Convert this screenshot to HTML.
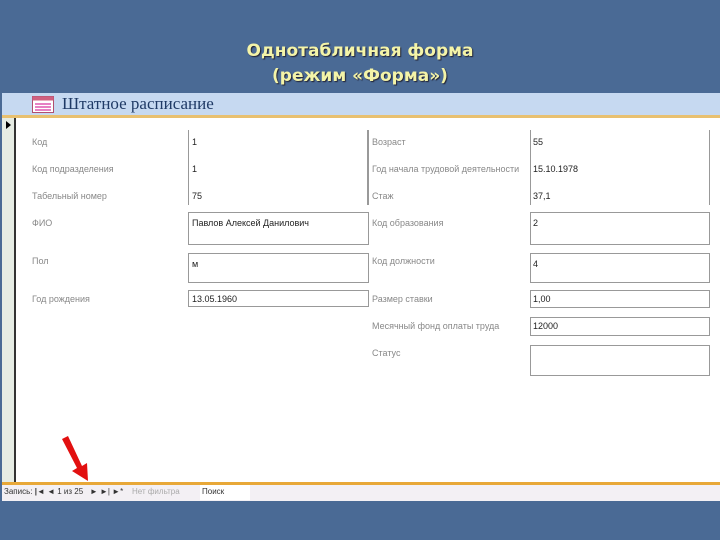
<!DOCTYPE html>
<html><head><meta charset="utf-8"><style>
body{margin:0;width:720px;height:540px;background:#4a6a95;position:relative;overflow:hidden;font-family:"Liberation Sans",sans-serif}
.t{position:absolute;left:0;width:720px;text-align:center;color:#f4f4a8;font-weight:bold;font-size:17px;font-family:"DejaVu Sans",sans-serif;text-shadow:1px 1px 1px #223}
.win{position:absolute;left:2px;top:93px;width:718px;height:405px;background:#fff}
.hd{position:absolute;left:0;top:0;width:718px;height:22px;background:#c6d9f1;border-bottom:3px solid #e8c070}
.hd span{position:absolute;left:60px;top:1px;font-family:"Liberation Serif",serif;font-size:17px;color:#1f3a66}
.sel{position:absolute;left:0;top:25px;width:12px;height:364px;background:#e6ece4;border-right:2px solid #333}
.l{position:absolute;font-size:9px;color:#888}
.v{position:absolute;font-size:9px;color:#222}
.b{position:absolute;border:1px solid #999;box-sizing:border-box}
.st{position:absolute;left:0;top:389px;width:718px;height:16px;background:#f3f0f4;border-top:3px solid #e8a838;font-size:8px;color:#333}
</style></head><body>
<div class="t" style="top:41px">Однотабличная форма</div>
<div class="t" style="top:66px">(режим «Форма»)</div>
<div class="win">
<div class="hd"><svg style="position:absolute;left:30px;top:3px" width="22" height="17"><rect x="0.5" y="0.5" width="21" height="16" fill="#fff" stroke="#b05070"/><rect x="0.5" y="0.5" width="21" height="4" fill="#d06080"/><line x1="3" y1="8" x2="19" y2="8" stroke="#c08"/><line x1="3" y1="11" x2="19" y2="11" stroke="#c08"/><line x1="3" y1="14" x2="19" y2="14" stroke="#c08"/></svg><span>Штатное расписание</span></div>
<div class="sel"><svg width="10" height="10" style="position:absolute;left:3px;top:2px"><path d="M1 1L6 5L1 9Z" fill="#000"/></svg></div>
<div class="b" style="left:186px;top:37px;width:181px;height:75px;border-top:none;border-bottom:none"></div>
<div class="b" style="left:365px;top:37px;width:1px;height:75px"></div>
<div class="b" style="left:528px;top:37px;width:180px;height:75px;border-top:none;border-bottom:none"></div>
<div class="l" style="left:30px;top:44px">Код</div><div class="v" style="left:190px;top:44px">1</div>
<div class="l" style="left:30px;top:71px">Код подразделения</div><div class="v" style="left:190px;top:71px">1</div>
<div class="l" style="left:30px;top:98px">Табельный номер</div><div class="v" style="left:190px;top:98px">75</div>
<div class="l" style="left:30px;top:125px">ФИО</div>
<div class="b" style="left:186px;top:119px;width:181px;height:33px"></div><div class="v" style="left:190px;top:125px">Павлов Алексей Данилович</div>
<div class="l" style="left:30px;top:163px">Пол</div>
<div class="b" style="left:186px;top:160px;width:181px;height:30px"></div><div class="v" style="left:190px;top:166px">м</div>
<div class="l" style="left:30px;top:201px">Год рождения</div>
<div class="b" style="left:186px;top:197px;width:181px;height:17px"></div><div class="v" style="left:190px;top:201px">13.05.1960</div>
<div class="l" style="left:370px;top:44px">Возраст</div><div class="v" style="left:531px;top:44px">55</div>
<div class="l" style="left:370px;top:71px">Год начала трудовой деятельности</div><div class="v" style="left:531px;top:71px">15.10.1978</div>
<div class="l" style="left:370px;top:98px">Стаж</div><div class="v" style="left:531px;top:98px">37,1</div>
<div class="l" style="left:370px;top:125px">Код образования</div>
<div class="b" style="left:528px;top:119px;width:180px;height:33px"></div><div class="v" style="left:531px;top:125px">2</div>
<div class="l" style="left:370px;top:163px">Код должности</div>
<div class="b" style="left:528px;top:160px;width:180px;height:30px"></div><div class="v" style="left:531px;top:166px">4</div>
<div class="l" style="left:370px;top:201px">Размер ставки</div>
<div class="b" style="left:528px;top:197px;width:180px;height:18px"></div><div class="v" style="left:531px;top:201px">1,00</div>
<div class="l" style="left:370px;top:228px">Месячный фонд оплаты труда</div>
<div class="b" style="left:528px;top:224px;width:180px;height:19px"></div><div class="v" style="left:531px;top:228px">12000</div>
<div class="l" style="left:370px;top:255px">Статус</div>
<div class="b" style="left:528px;top:252px;width:180px;height:31px"></div>
<div class="st"><span style="position:absolute;left:2px;top:2px">Запись: <b>|◄</b> ◄ 1 из 25 &nbsp; ► ►| ►*</span><span style="position:absolute;left:130px;top:2px;color:#aaa">Нет фильтра</span><span style="position:absolute;left:198px;top:0;width:48px;height:13px;background:#fff;padding:2px 0 0 2px">Поиск</span></div>
</div>
<svg style="position:absolute;left:58px;top:434px" width="40" height="50"><path d="M4 5L19 34L14 37L30 47L29 29L24 32L10 2Z" fill="#e21010"/></svg>
</body></html>
